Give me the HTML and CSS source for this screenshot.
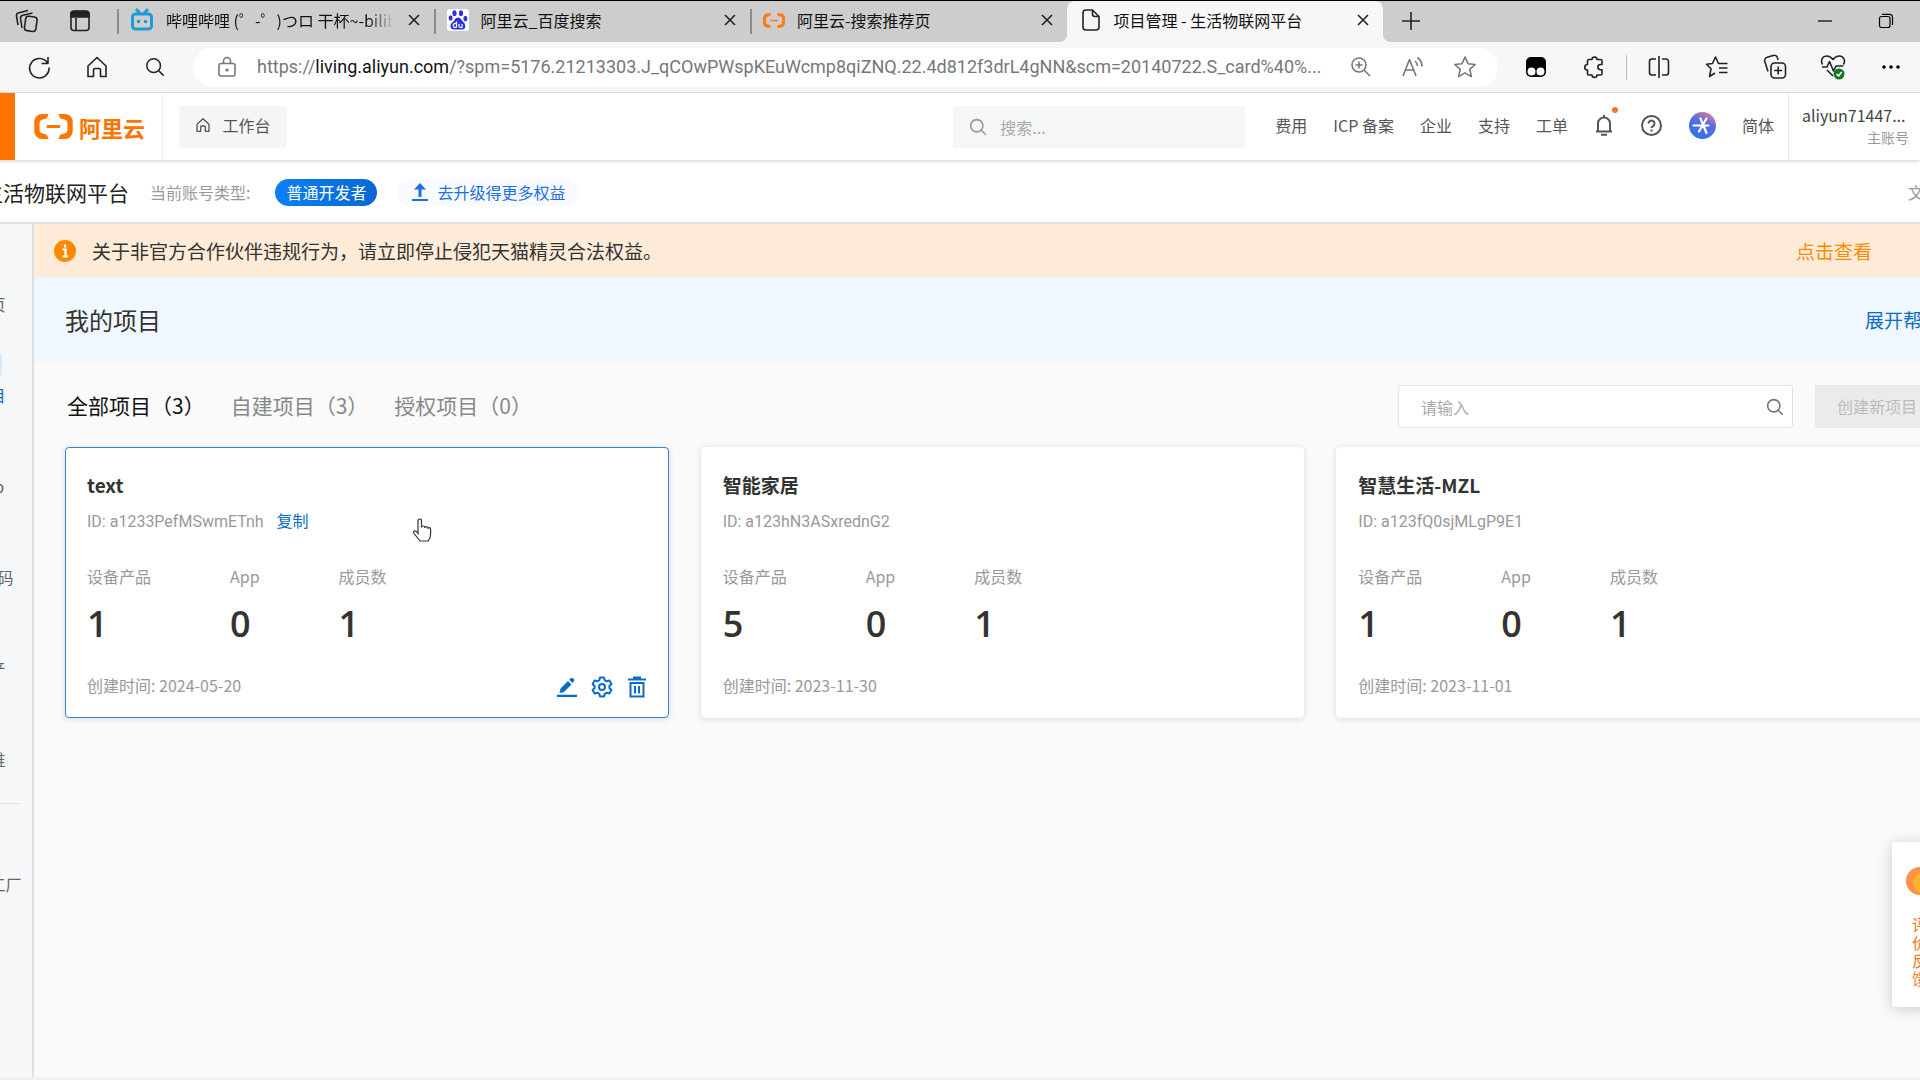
FILE: index.html
```html
<!DOCTYPE html>
<html lang="zh-CN">
<head>
<meta charset="utf-8">
<title>项目管理 - 生活物联网平台</title>
<link rel="stylesheet" href="styles.css">
</head>
<body>
<svg class="defs" aria-hidden="true">
  <symbol id="i-close" viewBox="0 0 14 14"><path d="M2 2l10 10M12 2L2 12"/></symbol>
  <symbol id="i-search" viewBox="0 0 22 22"><circle cx="9.500" cy="9.500" r="7.500"/><path d="M15 15L20.500 20.500"/></symbol>
  <symbol id="i-home" viewBox="0 0 24 24"><path d="M3 11l9-8.500 9 8.500v10.500h-5.500v-6.500a1.500 1.500 0 0 0-1.500-1.500h-4a1.500 1.500 0 0 0-1.500 1.500v6.500H3z"/></symbol>
  <symbol id="i-ali" viewBox="0 0 40 26"><path fill="currentColor" d="M15 0H8a8 8 0 0 0-8 8v10a8 8 0 0 0 8 8h7l-2-4.500-5-1.500a3 3 0 0 1-2.500-3V9A3 3 0 0 1 8 6l5-1.500zM25 0h7a8 8 0 0 1 8 8v10a8 8 0 0 1-8 8h-7l2-4.500 5-1.500a3 3 0 0 0 2.500-3V9A3 3 0 0 0 32 6l-5-1.500zM13 11.500h14v3H13z"/></symbol>
</svg>

<div class="tabstrip">
  <div class="strip-tools">
    <button class="plain" aria-label="工作区"><svg class="ic" width="26" height="26" viewBox="0 0 26 26"><rect x="11" y="8.500" width="11.500" height="14.500" rx="3" transform="rotate(8 16 16)"/><path d="M8 20l-1.500-9.500a3 3 0 0 1 2.500-3.300L18.500 5M4 17L2.500 8a3 3 0 0 1 2.500-3.300L14 2.500"/></svg></button>
    <button class="plain" aria-label="标签操作"><svg class="ic" width="22" height="22" viewBox="0 0 22 22"><rect x="2" y="1.500" width="18" height="19" rx="3"/><path class="solid" d="M2 3.500Q2 1 5 1h12q3 0 3 3v3H2z"/><path d="M7 8v12"/></svg></button>
  </div>
  <nav class="tabs" aria-label="标签页">
    <div class="tab">
      <svg width="24" height="24" viewBox="0 0 24 24" fill="none" stroke="#1f9bd6" stroke-width="3"><rect x="2.500" y="6" width="19" height="15" rx="3"/><path d="M6 1l4 4.500M18 1l-4 4.500M8.500 12v3M15.500 12v3"/></svg>
      <span class="tab-title fade">哔哩哔哩 (゜-゜)つロ 干杯~-bilibili</span>
      <button class="plain x" aria-label="关闭"><svg class="ic" width="14" height="14"><use href="#i-close"/></svg></button>
    </div>
    <div class="tab">
      <svg width="22" height="22" viewBox="0 0 22 22"><rect width="22" height="22" rx="3" fill="#fff"/><g fill="#2d35dc"><ellipse cx="7.500" cy="4.200" rx="2.100" ry="2.900"/><ellipse cx="14" cy="4.200" rx="2.100" ry="2.900"/><ellipse cx="3.600" cy="9" rx="2" ry="2.700"/><ellipse cx="18.400" cy="9.500" rx="2" ry="2.700"/><path d="M11 8.500c3 0 3.500 3 5.500 4.800s3.500 7-1.500 7.200c-2 .1-6 .1-8 0-5-.2-4-5.500-1.500-7.200S8 8.500 11 8.500z"/></g><path d="M9.500 12.500v6M9.500 18a2 2 0 1 1 0-3M12 15v2q0 1.500 1.500 1.500H15V15" fill="none" stroke="#fff" stroke-width="1.200"/></svg>
      <span class="tab-title">阿里云_百度搜索</span>
      <button class="plain x" aria-label="关闭"><svg class="ic" width="14" height="14"><use href="#i-close"/></svg></button>
    </div>
    <div class="tab">
      <svg class="orange" width="22" height="15"><use href="#i-ali"/></svg>
      <span class="tab-title">阿里云-搜索推荐页</span>
      <button class="plain x" aria-label="关闭"><svg class="ic" width="14" height="14"><use href="#i-close"/></svg></button>
    </div>
    <div class="tab active">
      <svg class="ic" width="22" height="24" viewBox="0 0 22 24"><path d="M6 2h6.500L19 8.500V19a3 3 0 0 1-3 3H6a3 3 0 0 1-3-3V5a3 3 0 0 1 3-3zM12.500 2v4a2.500 2.500 0 0 0 2.500 2.500h4"/></svg>
      <span class="tab-title">项目管理 - 生活物联网平台</span>
      <button class="plain x" aria-label="关闭"><svg class="ic" width="14" height="14"><use href="#i-close"/></svg></button>
    </div>
  </nav>
  <button class="plain new-tab" aria-label="新建标签页"><svg class="ic" width="20" height="20" viewBox="0 0 20 20"><path d="M10 1v18M1 10h18"/></svg></button>
  <div class="window-tools">
    <button class="plain" aria-label="最小化"><svg class="ic" width="14" height="14" viewBox="0 0 14 14"><path d="M0 7h14"/></svg></button>
    <button class="plain" aria-label="还原"><svg class="ic" width="16" height="16" viewBox="0 0 16 16"><rect x="1.500" y="3.500" width="10.500" height="11" rx="2"/><path d="M4 1.300h7.500a3 3 0 0 1 3 3V12"/></svg></button>
  </div>
</div>

<div class="toolbar">
  <button class="plain tool" aria-label="刷新"><svg class="ic" width="24" height="24" viewBox="0 0 24 24"><path d="M20.500 8A9.700 9.700 0 1 0 22 12.500M21 2v6.500h-6.500"/></svg></button>
  <button class="plain tool" aria-label="主页"><svg class="ic" width="24" height="24"><use href="#i-home"/></svg></button>
  <button class="plain tool" aria-label="搜索"><svg class="ic" width="20" height="20"><use href="#i-search"/></svg></button>
  <div class="address">
    <svg class="ic lock" width="20" height="22" viewBox="0 0 20 22"><rect x="2" y="7.500" width="16" height="12.500" rx="2"/><path d="M6.500 7.500V5a3.500 3.500 0 0 1 7 0v2.500"/><circle class="solid" cx="10" cy="14" r=".8"/></svg>
    <div class="url" role="textbox" aria-label="地址">https://<b>living.aliyun.com</b>/?spm=5176.21213303.J_qCOwPWspKEuWcmp8qiZNQ.22.4d812f3drL4gNN&amp;scm=20140722.S_card%40%...</div>
    <button class="plain" aria-label="缩放"><svg class="ic" width="22" height="22" viewBox="0 0 22 22"><circle cx="9" cy="9" r="7"/><path d="M14 14l6 6M9 5.500v7M5.500 9h7"/></svg></button>
    <button class="plain" aria-label="朗读"><svg class="ic" width="24" height="22" viewBox="0 0 24 22"><path d="M2 20L8.500 3.500 15 20M4.500 14h8M14 5q2.500 2 2.500 5M16.500 1.500Q21 5 21 10.500"/></svg></button>
    <button class="plain" aria-label="收藏"><svg class="ic" width="24" height="24" viewBox="0 0 24 24"><path d="M12 2l3 6.700 7.200.8-5.400 4.900 1.600 7.200L12 17.900l-6.400 3.700 1.600-7.200-5.400-4.900L9 8.700z"/></svg></button>
  </div>
  <button class="plain tool" aria-label="脚本"><svg width="22" height="24" viewBox="0 0 22 24"><rect x="1" y="2" width="20" height="20" rx="5"/><circle cx="6.500" cy="16.500" r="4" fill="#fff"/><circle cx="15.500" cy="16.500" r="4" fill="#fff"/></svg></button>
  <button class="plain tool" aria-label="扩展"><svg class="ic" width="24" height="24" viewBox="0 0 24 24"><path d="M7 4.500h3a2.500 2.500 0 0 1 5 0h3.500a1.500 1.500 0 0 1 1.500 1.500v3.500h-1.500a2.600 2.600 0 0 0 0 5.200H20v3.800a1.500 1.500 0 0 1-1.500 1.500H15a2.500 2.500 0 0 1-5 0H7a1.500 1.500 0 0 1-1.500-1.500V15a2.600 2.600 0 0 1 0-5.500V6A1.500 1.500 0 0 1 7 4.500z"/></svg></button>
  <span class="tool-divider"></span>
  <button class="plain tool" aria-label="分屏"><svg class="ic" width="24" height="24" viewBox="0 0 24 24"><path d="M9 4H5a2.500 2.500 0 0 0-2.500 2.500v11A2.500 2.500 0 0 0 5 20h4M15 4h4a2.500 2.500 0 0 1 2.500 2.500v11A2.500 2.500 0 0 1 19 20h-4M12 1v22"/></svg></button>
  <button class="plain tool" aria-label="收藏夹"><svg class="ic" width="24" height="24" viewBox="0 0 24 24"><path d="M22.500 8.500H13.500L10.500 2 7.500 8.500l-6 .8 4.500 4.500L4.500 21.500l5.500-3.500M14 13h8.500M14 17.500h8.500"/></svg></button>
  <button class="plain tool" aria-label="集锦"><svg class="ic" width="24" height="26" viewBox="0 0 24 26"><rect x="8" y="9" width="14.500" height="15" rx="3.500"/><path d="M15.200 12.500v8M11.200 16.500h8M5 17.500L1.800 7.500a3.500 3.500 0 0 1 2.400-4.300l6-1.700a3.500 3.500 0 0 1 4.300 2.400L15.200 6"/></svg></button>
  <button class="plain tool" aria-label="浏览器概要"><svg class="ic" width="26" height="26" viewBox="0 0 26 26"><path d="M13 22l-6-6M2.500 10.500C0 5.500 3 2 6.500 2 9.500 2 11.500 3.500 13 5.500 14.500 3.500 16.500 2 19.500 2 23 2 26 6 23.500 10.500M2 13h5l2.500-5.500 4 9.500 2.500-5h7.500"/><circle cx="19" cy="20" r="5.500" fill="#14781f" stroke="none"/><path d="M16.500 20l2 2 3.200-4" stroke="#fff"/></svg></button>
  <button class="plain tool" aria-label="更多"><svg width="20" height="6" viewBox="0 0 20 6"><circle cx="3" cy="3" r="1.800"/><circle cx="10" cy="3" r="1.800"/><circle cx="17" cy="3" r="1.800"/></svg></button>
</div>

<div class="page">
  <header class="topbar">
    <button class="plain product-menu" aria-label="产品菜单"></button>
    <a class="logo" href="#"><svg width="39" height="25"><use href="#i-ali"/></svg>阿里云</a>
    <button class="workbench"><svg class="ic" width="16" height="16"><use href="#i-home"/></svg>工作台</button>
    <label class="site-search"><svg class="ic" width="18" height="18"><use href="#i-search"/></svg><input type="text" placeholder="搜索..." aria-label="搜索"></label>
    <nav class="top-links">
      <a href="#">费用</a><a href="#">ICP 备案</a><a href="#">企业</a><a href="#">支持</a><a href="#">工单</a>
      <button class="plain bell" aria-label="消息"><svg class="ic" width="20" height="22" viewBox="0 0 20 22"><path d="M2 17.500h16M4 17V9.500a6 6 0 0 1 12 0V17M10 1v3M7 20.800h6"/></svg><span class="bell-dot"></span></button>
      <button class="plain" aria-label="帮助"><svg class="ic" width="23" height="23" viewBox="0 0 23 23"><circle cx="11.500" cy="11.500" r="9.500"/><path d="M8.500 9.500a3 3 0 1 1 4.500 2.600c-1 .6-1.500 1-1.500 2M11.500 15.500v2"/></svg></button>
      <button class="plain" aria-label="助手"><svg width="27" height="27" viewBox="0 0 27 27"><defs><linearGradient id="g" x1=".8" y1="0" x2=".3" y2="1"><stop offset="0" stop-color="#e77a9a"/><stop offset=".4" stop-color="#5d6be0"/><stop offset="1" stop-color="#2d73e8"/></linearGradient></defs><circle cx="13.500" cy="13.500" r="13.500" fill="url(#g)"/><path d="M4.500 13.500h8.500M13 13.500h6.500M11.500 6.500l6 14.500M17.500 6.500l-7.500 13" stroke="#fff" stroke-width="2.200" stroke-linecap="round"/></svg></button>
      <a href="#">简体</a>
    </nav>
    <a class="account" href="#"><span>aliyun71447...</span><small>主账号</small></a>
  </header>

  <div class="subbar">
    <h1>生活物联网平台</h1>
    <span class="account-label">当前账号类型:</span>
    <span class="badge">普通开发者</span>
    <a class="upgrade" href="#"><svg width="16" height="18" viewBox="0 0 16 18"><path fill="currentColor" d="M8 0l6 6.500H9.500V14h-3V6.500H2zM0 16h16v2H0z"/></svg>去升级得更多权益</a>
    <a class="docs" href="#">文档</a>
  </div>

  <div class="body">
    <nav class="sidebar">
      <a href="#"><i></i>首页</a>
      <a href="#" class="current"><i></i>项目</a>
      <a href="#"><i></i>App</a>
      <a href="#"><i></i>激活码</a>
      <a href="#"><i></i>量产</a>
      <a href="#"><i></i>运维</a>
      <hr>
      <a href="#"><i></i>生活工厂</a>
    </nav>
    <main>
      <div class="notice">
        <svg width="22" height="22" viewBox="0 0 22 22"><circle cx="11" cy="11" r="11" fill="#ff8a00"/><path d="M11 4.500v3M8.500 9.500H11.500V16M8.500 16.500h5.500" fill="none" stroke="#fff" stroke-width="2.200"/></svg>
        <p>关于非官方合作伙伴违规行为，请立即停止侵犯天猫精灵合法权益。</p>
        <a href="#">点击查看</a>
      </div>
      <div class="heading"><h2>我的项目</h2><a href="#">展开帮助</a></div>
      <div class="filters">
        <div class="filter-tabs">
          <button class="plain on">全部项目（3）</button>
          <button class="plain">自建项目（3）</button>
          <button class="plain">授权项目（0）</button>
        </div>
        <label class="find"><input type="text" placeholder="请输入" aria-label="搜索项目"><svg class="ic" width="18" height="18"><use href="#i-search"/></svg></label>
        <button class="create" disabled>创建新项目</button>
      </div>
      <div class="cards">
        <article class="card selected">
          <h3>text</h3>
          <p class="pid">ID: a1233PefMSwmETnh <a href="#">复制</a></p>
          <dl><div><dt>设备产品</dt><dd>1</dd></div><div><dt>App</dt><dd>0</dd></div><div><dt>成员数</dt><dd>1</dd></div></dl>
          <div class="foot"><span>创建时间: 2024-05-20</span>
            <span class="actions">
              <button class="plain" aria-label="编辑"><svg width="20" height="22" viewBox="0 0 20 22" fill="currentColor"><path d="M2.500 17l1-4.500L11 5l3.500 3.500-7.500 7.500zM12.200 3.800l1.800-1.800q1-.7 2 .3l1 1q.8.900 0 1.800L15.500 7zM0 18.800h20v2.200H0z"/></svg></button>
              <button class="plain" aria-label="设置"><svg width="22" height="22" viewBox="0 0 22 22" fill="none" stroke="currentColor" stroke-width="2" stroke-linejoin="round"><path d="M9 1.500h4l.7 2.700 2 1.100 2.700-.8 2 3.500-2 2v2l2 2-2 3.500-2.700-.8-2 1.100-.7 2.700H9l-.7-2.700-2-1.100-2.700.8-2-3.500 2-2v-2l-2-2 2-3.500 2.700.8 2-1.100z"/><circle cx="11" cy="11" r="3"/></svg></button>
              <button class="plain" aria-label="删除"><svg width="20" height="22" viewBox="0 0 20 22" fill="none" stroke="currentColor" stroke-width="2"><path d="M1 3.500h18M6 1.500h8M3.500 7v13.500h13V7zM8 10v7.500M12 10v7.500"/></svg></button>
            </span>
          </div>
          <svg class="pointer" width="20" height="24" viewBox="0 0 20 24"><path d="M6 13V3q0-2 1.800-2T9.500 3v6.500q0-1.500 1.700-1.500t1.700 2q0-1.300 1.500-1.300t1.600 2q0-1 1.300-1t1.300 1.800V16q0 4-2.500 7H8L2 15.500q-1-2 .5-2.500t3.500 2.500z" fill="#fff" stroke="#333" stroke-width="1.200"/></svg>
        </article>
        <article class="card">
          <h3>智能家居</h3>
          <p class="pid">ID: a123hN3ASxrednG2</p>
          <dl><div><dt>设备产品</dt><dd>5</dd></div><div><dt>App</dt><dd>0</dd></div><div><dt>成员数</dt><dd>1</dd></div></dl>
          <div class="foot"><span>创建时间: 2023-11-30</span></div>
        </article>
        <article class="card">
          <h3>智慧生活-MZL</h3>
          <p class="pid">ID: a123fQ0sjMLgP9E1</p>
          <dl><div><dt>设备产品</dt><dd>1</dd></div><div><dt>App</dt><dd>0</dd></div><div><dt>成员数</dt><dd>1</dd></div></dl>
          <div class="foot"><span>创建时间: 2023-11-01</span></div>
        </article>
      </div>
    </main>
  </div>
</div>
<button class="feedback"><i></i>评价反馈</button>
</body>
</html>
```

FILE: styles.css
```css
* { box-sizing: border-box; }
html { height: 100%; }
body {
  margin: 0;
  min-height: 100%;
  display: flex;
  flex-direction: column;
  overflow: hidden;
  position: relative;
  font: 16px/24px "Noto Sans CJK SC", "Noto Sans", sans-serif;
  color: #333;
  background: #fafafa;
  border-top: 1px solid #000;
}
h1, h2, h3, p, dl, dd { margin: 0; font-weight: 400; }
a { text-decoration: none; color: inherit; }
button, input { font: inherit; color: inherit; }
button { padding: 0; border: 0; cursor: pointer; white-space: nowrap; }
.plain { background: none; display: flex; align-items: center; justify-content: center; }
svg { flex: none; display: block; }
.defs { position: absolute; width: 0; height: 0; }
.ic { fill: none; stroke: currentColor; stroke-width: 2; stroke-linejoin: round; }
.ic .solid { fill: currentColor; }
.orange { color: #ff7a1a; }

/* browser window */
.tabstrip { display: flex; height: 41px; padding-bottom: 1px; background: #cdcdcd; color: #222; }
.strip-tools { display: flex; flex: 0 0 117px; padding-right: 11px; }
.strip-tools button { flex: 1; }
.tabs { display: flex; flex: 0 1 1266px; min-width: 0; height: 40px; }
.tab {
  flex: 1;
  min-width: 0;
  display: flex;
  align-items: center;
  gap: 12px;
  padding: 0 12px 2px 13px;
  position: relative;
}
.tab::before { content: ""; position: absolute; left: 0; top: 8px; height: 25px; width: 2px; background: #8c8c8c; }
.tab-title { flex: 1; overflow: hidden; white-space: nowrap; color: #111; }
.fade { -webkit-mask-image: linear-gradient(90deg, #000 88%, transparent); mask-image: linear-gradient(90deg, #000 88%, transparent); }
.x { width: 16px; height: 16px; }
.active { height: 41px; padding-bottom: 3px; background: #f7f7f7; border-radius: 8px 8px 0 0; }
.active::before { left: -8px; top: auto; bottom: 0; width: 8px; height: 8px; background: radial-gradient(circle at 0 0, transparent 8px, #f7f7f7 8px); }
.active::after { content: ""; position: absolute; right: -8px; bottom: 0; width: 8px; height: 8px; background: radial-gradient(circle at 100% 0, transparent 8px, #f7f7f7 8px); }
.new-tab { width: 56px; }
.window-tools { display: flex; margin-left: auto; padding-right: 4px; }
.window-tools button { width: 61px; }
.toolbar { display: flex; align-items: center; height: 51px; padding-left: 10px; background: #f7f7f7; color: #222; border-bottom: 1px solid #e4e4e4; }
.toolbar .ic, .strip-tools .ic, .tabstrip .ic { stroke-width: 1.6; }
.tabstrip .window-tools .ic { stroke-width: 1.2; color: #000; }
.tool { width: 58px; height: 40px; }
.address { flex: 1; min-width: 0; display: flex; align-items: center; height: 39px; margin: 0 9px; padding: 0 7px 0 24px; border-radius: 20px; background: #fff; color: #777; }
.address button { width: 52px; height: 36px; }
.lock { margin-right: 20px; }
.url { flex: 1; min-width: 0; overflow: hidden; white-space: nowrap; font: 18px/28px Roboto, "Noto Sans CJK SC", sans-serif; color: #777; }
.url b { font-weight: 400; color: #111; }
.tool-divider { width: 1px; height: 25px; margin: 0 3px; background: #bbb; }

/* the console page is scrolled sideways inside the window */
.page { flex: 1; display: flex; flex-direction: column; margin-left: -53px; border-bottom: 3px solid #f1f1f1; }
.topbar { display: flex; align-items: center; height: 67px; background: #fff; color: #555; box-shadow: 0 1px 4px #0003; position: relative; }
.product-menu { width: 68px; height: 67px; background: #ff7300; }
.logo { display: flex; align-items: center; gap: 6px; width: 148px; height: 67px; padding-left: 19px; border-right: 1px solid #eee; color: #ff7300; font-size: 22px; font-weight: 700; }
.workbench { display: flex; align-items: center; justify-content: center; gap: 11px; width: 108px; height: 42px; margin-left: 16px; padding-bottom: 3px; border-radius: 3px; background: #f4f5f7; }
.site-search { display: flex; align-items: center; gap: 13px; width: 292px; height: 42px; margin-left: auto; padding: 0 16px; background: #f4f6f8; color: #999; }
.site-search input, .find input { flex: 1; min-width: 0; padding: 0; border: 0; background: none; outline: 0; }
input::placeholder { color: #aaa; }
.top-links { display: flex; align-items: center; gap: 26px; padding: 0 14px 3px 30px; white-space: nowrap; }
.bell { position: relative; }
.bell-dot { position: absolute; right: -4px; top: -7px; width: 6px; height: 6px; border-radius: 50%; background: #f5781e; }
.account { display: flex; flex-direction: column; justify-content: center; width: 132px; height: 67px; padding: 0 11px 3px 13px; border-left: 1px solid #e8e8e8; color: #444; }
.account small { align-self: flex-end; font-size: 14px; line-height: 20px; color: #999; }

.subbar { display: flex; align-items: center; height: 64px; padding: 2px 0 0 35px; background: #fff; border-bottom: 2px solid #dfe1e2; }
.subbar h1 { margin-right: 21px; font-size: 21px; line-height: 28px; color: #222; }
.account-label { margin-right: 25px; color: #999; }
.badge { padding: 0 11px; line-height: 27px; border-radius: 14px; background: linear-gradient(90deg, #0a80f5, #0a68d0); color: #fff; }
.upgrade { display: flex; align-items: center; gap: 9px; margin-left: 20px; padding: 0 15px; line-height: 27px; border-radius: 14px; background: #f8fafe; color: #1b6fe8; }
.docs { margin-left: auto; margin-right: -20px; color: #999; }

.body { flex: 1; display: flex; }
.sidebar { flex: 0 0 87px; background: #f5f7f9; border-right: 2px solid #dfdfdf; color: #666; padding-top: 38px; }
.sidebar a { display: flex; flex-direction: column; align-items: center; gap: 6px; height: 91px; }
.sidebar i { width: 24px; height: 24px; border-radius: 4px; }
.sidebar .current { color: #0a6cc8; }
.sidebar .current i { background: #d5ebff; }
.sidebar hr { height: 1px; margin: -5px 12px 38px; border: 0; background: #e2e4e6; }
main { flex: 1; min-width: 0; background: #fafafa; }
.notice { display: flex; align-items: center; height: 53px; padding: 0 48px 0 20px; background: #feebd8; font-size: 19px; }
.notice p { margin: 0 auto 0 16px; font-size: 19px; }
.notice a { color: #ff8a00; }
.heading { display: flex; align-items: center; justify-content: space-between; height: 86px; margin-right: -21px; padding-left: 31px; background: #f0f7ff; }
.heading h2 { font-size: 24px; line-height: 36px; }
.heading a { font-size: 19px; color: #0a6cc8; }
.filters { display: flex; align-items: center; margin: 22px -19px 19px 33px; }
.filter-tabs { display: flex; gap: 26px; margin-right: auto; padding-bottom: 3px; }
.filter-tabs button { font-size: 21px; line-height: 32px; color: #888; }
.filter-tabs .on { color: #111; }
.find { display: flex; align-items: center; width: 395px; height: 43px; padding: 0 8px 0 22px; border: 1px solid #e3e3e3; border-radius: 3px; background: #fff; color: #777; }
.create { width: 124px; height: 43px; margin-left: 22px; padding-bottom: 2px; background: #ebebeb; color: #bbb; cursor: default; }
.cards { display: grid; grid-template-columns: repeat(3, 1fr); gap: 32px; margin: 0 -20px 0 31px; }
.card { position: relative; padding: 25px 21px 20px; border: 1px solid #fff; border-radius: 4px; background: #fff; box-shadow: 0 1px 6px #0002; color: #999; }
.selected { border-color: #2f86d2; }
.card h3 { font-size: 19px; font-weight: 700; color: #333; }
.pid { margin-top: 13px; font-family: Roboto, "Noto Sans CJK SC", sans-serif; }
.pid a { margin-left: 9px; color: #0a6cc8; }
.card dl { display: flex; gap: 79px; margin-top: 30px; }
.card dd { margin-top: 12px; font: 600 36px/48px "Open Sans", sans-serif; color: #333; }
.foot { display: flex; align-items: center; justify-content: space-between; height: 24px; margin-top: 25px; }
.actions { display: flex; gap: 14px; padding-top: 3px; color: #0a6cc8; }
.pointer { position: absolute; left: 346px; top: 70px; }

.feedback { position: absolute; right: -28px; top: 841px; width: 56px; height: 165px; padding: 25px 20px 0; background: #fff; box-shadow: 0 2px 14px #0003; color: #f07a28; line-height: 18px; white-space: normal; display: flex; flex-direction: column; align-items: center; gap: 20px; }
.feedback i { flex: none; width: 28px; height: 28px; border-radius: 50%; background: radial-gradient(circle at 70% 55%, #ffb22e 45%, #ff9248 50%); }
```
